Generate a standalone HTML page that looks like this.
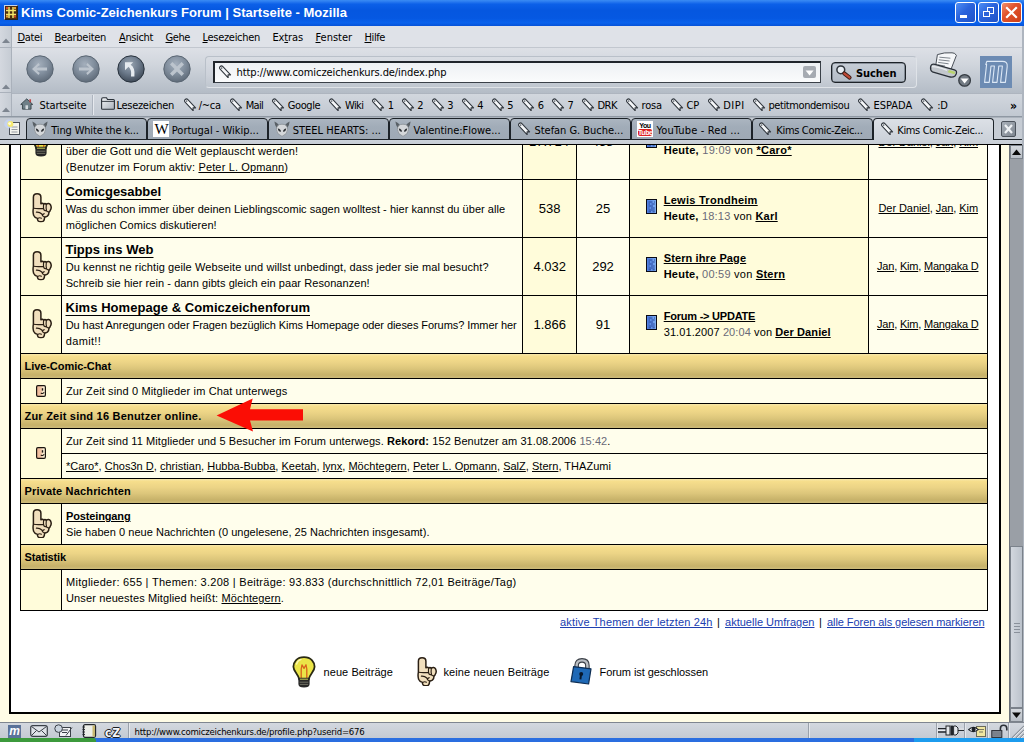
<!DOCTYPE html><html lang="de"><head><meta charset="utf-8"><title>Kims Comic-Zeichenkurs Forum | Startseite</title><style>
*{margin:0;padding:0;box-sizing:border-box}
html,body{width:1024px;height:742px;overflow:hidden}
body{position:relative;background:#fffce6;font-family:"Liberation Sans",sans-serif;font-size:12px;color:#000}
.a{position:absolute}
.t{position:absolute;white-space:nowrap;line-height:16px;height:16px}
.t b{font-weight:bold}
u{text-decoration:underline}
.g{color:#6a6a78}
.lk{color:#2040b0}
.tu{text-underline-offset:2.5px;text-decoration-thickness:1.4px}
</style></head><body>
<div class="a " style="left:9px;top:145px;width:992px;height:569px;background:#fff;border:2px solid #000;border-top:none"></div>
<div class="a " style="left:20px;top:145px;width:968px;height:466px;background:#000"></div>
<div class="a " style="left:21px;top:145px;width:40px;height:34px;background:#fffcda"></div>
<div class="a " style="left:62px;top:145px;width:460px;height:34px;background:#fffeec"></div>
<div class="a " style="left:523px;top:145px;width:53px;height:34px;background:#fffcda"></div>
<div class="a " style="left:577px;top:145px;width:52px;height:34px;background:#fffeec"></div>
<div class="a " style="left:630px;top:145px;width:238px;height:34px;background:#fffcda"></div>
<div class="a " style="left:869px;top:145px;width:118px;height:34px;background:#fffeec"></div>
<div class="a " style="left:21px;top:180px;width:40px;height:57px;background:#fffcda"></div>
<div class="a " style="left:62px;top:180px;width:460px;height:57px;background:#fffeec"></div>
<div class="a " style="left:523px;top:180px;width:53px;height:57px;background:#fffcda"></div>
<div class="a " style="left:577px;top:180px;width:52px;height:57px;background:#fffeec"></div>
<div class="a " style="left:630px;top:180px;width:238px;height:57px;background:#fffcda"></div>
<div class="a " style="left:869px;top:180px;width:118px;height:57px;background:#fffeec"></div>
<div class="a " style="left:21px;top:238px;width:40px;height:57px;background:#fffcda"></div>
<div class="a " style="left:62px;top:238px;width:460px;height:57px;background:#fffeec"></div>
<div class="a " style="left:523px;top:238px;width:53px;height:57px;background:#fffcda"></div>
<div class="a " style="left:577px;top:238px;width:52px;height:57px;background:#fffeec"></div>
<div class="a " style="left:630px;top:238px;width:238px;height:57px;background:#fffcda"></div>
<div class="a " style="left:869px;top:238px;width:118px;height:57px;background:#fffeec"></div>
<div class="a " style="left:21px;top:296px;width:40px;height:57px;background:#fffcda"></div>
<div class="a " style="left:62px;top:296px;width:460px;height:57px;background:#fffeec"></div>
<div class="a " style="left:523px;top:296px;width:53px;height:57px;background:#fffcda"></div>
<div class="a " style="left:577px;top:296px;width:52px;height:57px;background:#fffeec"></div>
<div class="a " style="left:630px;top:296px;width:238px;height:57px;background:#fffcda"></div>
<div class="a " style="left:869px;top:296px;width:118px;height:57px;background:#fffeec"></div>
<div class="a " style="left:21px;top:354px;width:966px;height:24px;background:linear-gradient(#f8e8aa 0%,#f6de8c 10%,#ecd486 35%,#dcc67b 60%,#c6b169 88%,#cdbb7a 100%)"></div>
<div class="a " style="left:21px;top:404px;width:966px;height:24px;background:linear-gradient(#f8e8aa 0%,#f6de8c 10%,#ecd486 35%,#dcc67b 60%,#c6b169 88%,#cdbb7a 100%)"></div>
<div class="a " style="left:21px;top:479px;width:966px;height:24px;background:linear-gradient(#f8e8aa 0%,#f6de8c 10%,#ecd486 35%,#dcc67b 60%,#c6b169 88%,#cdbb7a 100%)"></div>
<div class="a " style="left:21px;top:545px;width:966px;height:24px;background:linear-gradient(#f8e8aa 0%,#f6de8c 10%,#ecd486 35%,#dcc67b 60%,#c6b169 88%,#cdbb7a 100%)"></div>
<div class="a " style="left:21px;top:379px;width:40px;height:24px;background:#fffcda"></div>
<div class="a " style="left:62px;top:379px;width:925px;height:24px;background:#fffeec"></div>
<div class="a " style="left:21px;top:504px;width:40px;height:40px;background:#fffcda"></div>
<div class="a " style="left:62px;top:504px;width:925px;height:40px;background:#fffeec"></div>
<div class="a " style="left:21px;top:570px;width:40px;height:40px;background:#fffcda"></div>
<div class="a " style="left:62px;top:570px;width:925px;height:40px;background:#fffeec"></div>
<div class="a " style="left:21px;top:429px;width:40px;height:49px;background:#fffcda"></div>
<div class="a " style="left:62px;top:429px;width:925px;height:24px;background:#fffeec"></div>
<div class="a " style="left:62px;top:454px;width:925px;height:24px;background:#fffeec"></div>
<span class="t" style="left:65.7px;top:143px;font-size:11px;letter-spacing:0.143px;">über die Gott und die Welt geplauscht werden!</span>
<span class="t" style="left:65.7px;top:159px;font-size:11px;letter-spacing:0.144px;">(Benutzer im Forum aktiv: <u>Peter L. Opmann</u>)</span>
<span class="t" style="left:663.7px;top:142px;font-size:11px;letter-spacing:0.274px;"><b>Heute,</b> <span class="g">19:09</span> von <b><u>*Caro*</u></b></span>
<span class="t" style="left:549px;top:133.5px;font-size:13px;transform:translateX(-50%)">17.714</span>
<span class="t" style="left:602.5px;top:133.5px;font-size:13px;transform:translateX(-50%)">458</span>
<span class="t" style="left:878.5px;top:133.5px;font-size:11px;letter-spacing:-0.071px;"><u>Der Daniel</u>, <u>Jan</u>, <u>Kim</u></span>
<span class="t" style="left:65.5px;top:184px;font-size:13px;letter-spacing:-0.046px;"><b><u class="tu">Comicgesabbel</u></b></span>
<span class="t" style="left:65.7px;top:200.5px;font-size:11px;letter-spacing:0.038px;">Was du schon immer über deinen Lieblingscomic sagen wolltest - hier kannst du über alle</span>
<span class="t" style="left:65.7px;top:217px;font-size:11px;letter-spacing:0.063px;">möglichen Comics diskutieren!</span>
<span class="t" style="left:549.7px;top:201px;font-size:13px;transform:translateX(-50%)">538</span>
<span class="t" style="left:603px;top:201px;font-size:13px;transform:translateX(-50%)">25</span>
<span class="t" style="left:663.7px;top:192px;font-size:11px;letter-spacing:0.276px;"><b><u>Lewis Trondheim</u></b></span>
<span class="t" style="left:663.7px;top:208px;font-size:11px;letter-spacing:0.215px;"><b>Heute,</b> <span class="g">18:13</span> von <b><u>Karl</u></b></span>
<span class="t" style="left:878.5px;top:200px;font-size:11px;letter-spacing:-0.071px;"><u>Der Daniel</u>, <u>Jan</u>, <u>Kim</u></span>
<span class="t" style="left:65.5px;top:242px;font-size:13px;letter-spacing:0.026px;"><b><u class="tu">Tipps ins Web</u></b></span>
<span class="t" style="left:65.7px;top:258.5px;font-size:11px;letter-spacing:0.101px;">Du kennst ne richtig geile Webseite und willst unbedingt, dass jeder sie mal besucht?</span>
<span class="t" style="left:65.7px;top:275px;font-size:11px;letter-spacing:0.061px;">Schreib sie hier rein - dann gibts gleich ein paar Resonanzen!</span>
<span class="t" style="left:549.7px;top:259px;font-size:13px;transform:translateX(-50%)">4.032</span>
<span class="t" style="left:603px;top:259px;font-size:13px;transform:translateX(-50%)">292</span>
<span class="t" style="left:663.7px;top:250px;font-size:11px;letter-spacing:0.120px;"><b><u>Stern ihre Page</u></b></span>
<span class="t" style="left:663.7px;top:266px;font-size:11px;letter-spacing:0.241px;"><b>Heute,</b> <span class="g">00:59</span> von <b><u>Stern</u></b></span>
<span class="t" style="left:877px;top:258px;font-size:11px;letter-spacing:-0.196px;"><u>Jan</u>, <u>Kim</u>, <u>Mangaka D</u></span>
<span class="t" style="left:65.5px;top:300px;font-size:13px;letter-spacing:0.054px;"><b><u class="tu">Kims Homepage &amp; Comiczeichenforum</u></b></span>
<span class="t" style="left:65.7px;top:316.5px;font-size:11px;letter-spacing:-0.068px;">Du hast Anregungen oder Fragen bezüglich Kims Homepage oder dieses Forums? Immer her</span>
<span class="t" style="left:65.7px;top:333px;font-size:11px;letter-spacing:0.355px;">damit!!</span>
<span class="t" style="left:549.7px;top:317px;font-size:13px;transform:translateX(-50%)">1.866</span>
<span class="t" style="left:603px;top:317px;font-size:13px;transform:translateX(-50%)">91</span>
<span class="t" style="left:663.7px;top:308px;font-size:11px;letter-spacing:-0.222px;"><b><u>Forum -&gt; UPDATE</u></b></span>
<span class="t" style="left:663.7px;top:324px;font-size:11px;letter-spacing:0.099px;">31.01.2007 <span class="g">20:04</span> von <b><u>Der Daniel</u></b></span>
<span class="t" style="left:877px;top:316px;font-size:11px;letter-spacing:-0.196px;"><u>Jan</u>, <u>Kim</u>, <u>Mangaka D</u></span>
<span class="t" style="left:24.5px;top:358px;font-size:11px;letter-spacing:-0.060px;"><b>Live-Comic-Chat</b></span>
<span class="t" style="left:24.5px;top:408px;font-size:11px;letter-spacing:0.214px;"><b>Zur Zeit sind 16 Benutzer online.</b></span>
<span class="t" style="left:24.5px;top:483px;font-size:11px;letter-spacing:0.167px;"><b>Private Nachrichten</b></span>
<span class="t" style="left:24.5px;top:549px;font-size:11px;letter-spacing:-0.144px;"><b>Statistik</b></span>
<span class="t" style="left:66px;top:383px;font-size:11px;letter-spacing:0.129px;">Zur Zeit sind 0 Mitglieder im Chat unterwegs</span>
<span class="t" style="left:66px;top:432.8px;font-size:11px;letter-spacing:0.081px;">Zur Zeit sind 11 Mitglieder und 5 Besucher im Forum unterwegs. <b>Rekord:</b> 152 Benutzer am 31.08.2006 <span class="g">15:42</span>.</span>
<span class="t" style="left:66px;top:457.8px;font-size:11px;letter-spacing:0.020px;"><u>*Caro*</u>, <u>Chos3n D</u>, <u>christian</u>, <u>Hubba-Bubba</u>, <u>Keetah</u>, <u>lynx</u>, <u>Möchtegern</u>, <u>Peter L. Opmann</u>, <u>SalZ</u>, <u>Stern</u>, THAZumi</span>
<span class="t" style="left:66px;top:508px;font-size:11px;letter-spacing:-0.138px;"><b><u>Posteingang</u></b></span>
<span class="t" style="left:66px;top:524px;font-size:11px;letter-spacing:0.039px;">Sie haben 0 neue Nachrichten (0 ungelesene, 25 Nachrichten insgesamt).</span>
<span class="t" style="left:66px;top:574px;font-size:11px;letter-spacing:0.276px;">Mitglieder: 655 | Themen: 3.208 | Beiträge: 93.833 (durchschnittlich 72,01 Beiträge/Tag)</span>
<span class="t" style="left:66px;top:590px;font-size:11px;letter-spacing:0.124px;">Unser neuestes Mitglied heißt: <u>Möchtegern</u>.</span>
<span class="t" style="left:560px;top:613.5px;font-size:11px;letter-spacing:0.163px;"><span class="lk"><u>aktive Themen der letzten 24h</u></span></span>
<span class="t" style="left:717px;top:613.5px;font-size:11px;">|</span>
<span class="t" style="left:725px;top:613.5px;font-size:11px;letter-spacing:0.013px;"><span class="lk"><u>aktuelle Umfragen</u></span></span>
<span class="t" style="left:819px;top:613.5px;font-size:11px;">|</span>
<span class="t" style="left:827px;top:613.5px;font-size:11px;letter-spacing:-0.065px;"><span class="lk"><u>alle Foren als gelesen markieren</u></span></span>
<span class="t" style="left:323.5px;top:664px;font-size:11px;letter-spacing:0.077px;">neue Beiträge</span>
<span class="t" style="left:443.5px;top:664px;font-size:11px;letter-spacing:0.102px;">keine neuen Beiträge</span>
<span class="t" style="left:599.5px;top:664px;font-size:11px;letter-spacing:-0.074px;">Forum ist geschlossen</span>
<svg class="a" style="left:214px;top:396px" width="92" height="38" viewBox="0 0 92 38"><polygon points="2.6,19.6 38.7,2.6 36,13.3 89,13.3 89,24.4 36,24.4 39,35.6" fill="#fb0d05"/></svg>
<svg width="0" height="0" style="position:absolute"><defs>
<symbol id="hand" viewBox="-0.8 -0.6 20 29.4" preserveAspectRatio="none">
<path d="M0.6,14.5 V3.6 Q0.6,0.2 4.3,0.2 Q8.1,0.2 8.1,3.6 V10.2 Q9.6,9 10.8,10.6 Q12.2,9.4 13.5,10.6 Q16,8.8 17.8,11.4 Q19.2,14.6 17.4,16.8 Q17,18 16.2,18.4 Q16.2,21.4 14.6,22.6 Q13,23.4 11.8,23.6 Q11.8,26.4 10.6,27.6 Q8,28.8 5.6,27.6 Q4.4,26.4 4.6,24.8 Q1.8,24 0.8,21.6 Q-0.2,18 0.6,14.5 Z" fill="#f1dfbd" stroke="#2a1f14" stroke-width="1.5" stroke-linejoin="round"/>
<path d="M0.8,14.7 Q5,15.4 10.4,14.8 M10.8,10.8 Q10.4,13.4 11,16.2 M13.5,10.8 Q13,14 13.8,17.4 M10.4,14.8 Q11,17 13.8,17.4 Q15,18.4 16.2,18.4 M3.6,18.6 Q7,18.4 9,20.4 Q10.4,21.2 11.4,20 M9,20.6 Q9.4,22.6 11.8,23.4 M4.8,24.8 Q7,23.6 8.6,24.6" fill="none" stroke="#2a1f14" stroke-width="1.15" stroke-linecap="round"/>
</symbol>
<symbol id="bulb" viewBox="0 0 24 32">
<path d="M12,1.2 C4.6,1.2 1.4,6.4 1.4,10.8 C1.4,15.6 6.4,18 7.2,23.4 H16.8 C17.6,18 22.6,15.6 22.6,10.8 C22.6,6.4 19.4,1.2 12,1.2 Z" fill="#ebe548" stroke="#2a2a14" stroke-width="1.8"/>
<path d="M4.6,8 Q5.6,4.4 9,3.4" fill="none" stroke="#fbf9b0" stroke-width="1.4" stroke-linecap="round"/>
<path d="M9.2,22.6 V13 L10,8.8 L12,12.4 L14,8.8 L14.8,13 V22.6" fill="none" stroke="#d8631c" stroke-width="1.3" stroke-linejoin="round"/>
<path d="M6.4,21.8 H17.6 V28 Q17.6,31.6 12,31.6 Q6.4,31.6 6.4,28 Z" fill="#262626"/>
<path d="M8,23.2 H16" stroke="#c9cf58" stroke-width="1"/><path d="M7.6,26.2 H16.4 M7.8,28.4 H16.2" stroke="#77776a" stroke-width="0.9"/>
</symbol>
<symbol id="lock" viewBox="0 0 22 27">
<path d="M6.6,12 V7.4 Q6.6,2.4 12,2.4 Q17.4,2.4 17.4,7.4 V12" fill="none" stroke="#3a3f46" stroke-width="4.6"/>
<path d="M6.6,12 V7.4 Q6.6,2.4 12,2.4 Q17.4,2.4 17.4,7.4 V12" fill="none" stroke="#b9bdc2" stroke-width="2.4"/>
<path d="M3.6,8.6 L21,10.8 L18.6,26 L1,23.6 Z" fill="#1f69b6" stroke="#0c2c52" stroke-width="1.2" stroke-linejoin="round"/>
<circle cx="11.2" cy="16" r="2" fill="#08182c"/><path d="M11,16.4 L10.4,21.4" stroke="#08182c" stroke-width="2"/>
</symbol>
<linearGradient id="dg" x1="0" x2="1"><stop offset="0" stop-color="#4a7ae0"/><stop offset="1" stop-color="#80b0f0"/></linearGradient>
<symbol id="doc" viewBox="0 0 11 15"><rect x="0.5" y="0.5" width="10" height="14" fill="url(#dg)" stroke="#0a0a14"/>
<path d="M2.5,3 H6.5 M8,3 H9 M2.5,5 H4 M5.5,5 H8.8 M2.5,7 H7 M2.5,9 H3.5 M5,9 H8.8 M2.5,11 H8.8 M2.5,12.8 H5 M6.5,12.8 H8.8" stroke="#16348c" stroke-width="0.8"/></symbol>
<linearGradient id="cg" x1="0" x2="1"><stop offset="0" stop-color="#efb898"/><stop offset="0.5" stop-color="#f3c6a6"/><stop offset="0.75" stop-color="#fbeed2"/><stop offset="1" stop-color="#fdf6dc"/></linearGradient>
<symbol id="chat" viewBox="0 0 10 12"><rect x="0.6" y="0.6" width="8.8" height="10.8" rx="1.3" fill="url(#cg)" stroke="#1a1410" stroke-width="1.2"/>
<rect x="5.8" y="3.2" width="1.4" height="2.4" fill="#1a1410"/><path d="M4.8,7.8 Q6.6,9.6 8.2,7.2" fill="none" stroke="#1a1410" stroke-width="1.1"/></symbol>
</defs></svg>
<svg class="a" style="left:32.2px;top:193.4px;" width="20" height="29.4"><use href="#hand"/></svg>
<svg class="a" style="left:646px;top:199px;" width="11" height="15"><use href="#doc"/></svg>
<svg class="a" style="left:32.2px;top:251.4px;" width="20" height="29.4"><use href="#hand"/></svg>
<svg class="a" style="left:646px;top:257px;" width="11" height="15"><use href="#doc"/></svg>
<svg class="a" style="left:32.2px;top:309.4px;" width="20" height="29.4"><use href="#hand"/></svg>
<svg class="a" style="left:646px;top:315px;" width="11" height="15"><use href="#doc"/></svg>
<svg class="a" style="left:32.2px;top:508.9px;" width="20" height="29.4"><use href="#hand"/></svg>
<svg class="a" style="left:36px;top:385px;" width="10" height="12"><use href="#chat"/></svg>
<svg class="a" style="left:36px;top:447px;" width="10" height="12"><use href="#chat"/></svg>
<svg class="a" style="left:292px;top:656px;" width="24" height="32"><use href="#bulb"/></svg>
<svg class="a" style="left:416.7px;top:656.8px;" width="20" height="29.4"><use href="#hand"/></svg>
<svg class="a" style="left:570px;top:658px;" width="22" height="27"><use href="#lock"/></svg>
<div class="a " style="left:21px;top:145px;width:966px;height:34px;overflow:hidden;background:none"><svg class="a" style="left:8px;top:-20px" width="24" height="32"><use href="#bulb"/></svg><svg class="a" style="left:625px;top:-12px" width="11" height="15"><use href="#doc"/></svg></div>
<div class="a " style="left:0px;top:0px;width:1024px;height:26px;background:linear-gradient(#3a8cf4 0%,#2b7cf0 6%,#0c60e8 16%,#0557e0 40%,#0558e2 70%,#0a62ec 88%,#0652d8 100%)"></div>
<span class="t" style="left:21px;top:5px;font-size:13px;letter-spacing:0.017px;color:#fff"><b>Kims Comic-Zeichenkurs Forum | Startseite - Mozilla</b></span>
<div class="a " style="left:0px;top:26px;width:1024px;height:22px;background:#dfe2e8;border-bottom:1px solid #c2c7cf"></div>
<span class="t" style="left:17.5px;top:30px;font-size:11px;letter-spacing:-0.384px;font-family:'DejaVu Sans Condensed','DejaVu Sans','Liberation Sans',sans-serif;font-stretch:condensed;"><u>D</u>atei</span>
<span class="t" style="left:54.5px;top:30px;font-size:11px;letter-spacing:-0.289px;font-family:'DejaVu Sans Condensed','DejaVu Sans','Liberation Sans',sans-serif;font-stretch:condensed;"><u>B</u>earbeiten</span>
<span class="t" style="left:119px;top:30px;font-size:11px;letter-spacing:-0.366px;font-family:'DejaVu Sans Condensed','DejaVu Sans','Liberation Sans',sans-serif;font-stretch:condensed;"><u>A</u>nsicht</span>
<span class="t" style="left:165.5px;top:30px;font-size:11px;letter-spacing:-0.410px;font-family:'DejaVu Sans Condensed','DejaVu Sans','Liberation Sans',sans-serif;font-stretch:condensed;"><u>G</u>ehe</span>
<span class="t" style="left:202.5px;top:30px;font-size:11px;letter-spacing:-0.298px;font-family:'DejaVu Sans Condensed','DejaVu Sans','Liberation Sans',sans-serif;font-stretch:condensed;"><u>L</u>esezeichen</span>
<span class="t" style="left:272.5px;top:30px;font-size:11px;letter-spacing:-0.133px;font-family:'DejaVu Sans Condensed','DejaVu Sans','Liberation Sans',sans-serif;font-stretch:condensed;">Ex<u>t</u>ras</span>
<span class="t" style="left:315.5px;top:30px;font-size:11px;letter-spacing:-0.022px;font-family:'DejaVu Sans Condensed','DejaVu Sans','Liberation Sans',sans-serif;font-stretch:condensed;"><u>F</u>enster</span>
<span class="t" style="left:364.5px;top:30px;font-size:11px;letter-spacing:-0.406px;font-family:'DejaVu Sans Condensed','DejaVu Sans','Liberation Sans',sans-serif;font-stretch:condensed;"><u>H</u>ilfe</span>
<div class="a " style="left:0px;top:48px;width:1024px;height:45px;background:linear-gradient(#dde0e6 0%,#d1d6dd 35%,#c0c7d0 72%,#b4bcc6 100%)"></div>
<div class="a " style="left:0px;top:93px;width:1024px;height:23px;background:linear-gradient(#d2d7de,#c1c8d1);border-top:1px solid #aeb5bf"></div>
<div class="a " style="left:0px;top:722px;width:1024px;height:16px;background:linear-gradient(#d3d8df,#c4cad3);border-top:1px solid #7f8690"></div>
<div class="a " style="left:0px;top:738px;width:1024px;height:4px;background:#2a6ee0"></div>
<div class="a " style="left:0px;top:738px;width:96px;height:4px;background:#3c9a3c;border-radius:0 3px 0 0"></div>
<div class="a " style="left:914px;top:738px;width:110px;height:4px;background:#1c9cee"></div>
<span class="t" style="left:134.5px;top:723.5px;font-size:9.5px;letter-spacing:-0.226px;font-family:'DejaVu Sans Condensed','DejaVu Sans','Liberation Sans',sans-serif;font-stretch:condensed;">http://www.comiczeichenkurs.de/profile.php?userid=676</span>
<svg width="0" height="0" style="position:absolute"><defs>
<symbol id="tg" viewBox="0 0 13 13"><g transform="translate(2.6,0.2) rotate(47)"><path d="M1.9,0 H13.2 L11.4,1.9 L13.8,3.8 H1.9 A1.9,1.9 0 0 1 1.9,0 Z" fill="#f6f8fa" stroke="#30363d" stroke-width="1.05" stroke-linejoin="round"/><circle cx="2.2" cy="1.9" r="0.75" fill="#5a6068"/></g></symbol>
<radialGradient id="nbd" cx="45%" cy="32%" r="68%"><stop offset="0" stop-color="#a4afbc"/><stop offset="0.5" stop-color="#8491a0"/><stop offset="1" stop-color="#5f6b79"/></radialGradient>
<radialGradient id="nbe" cx="45%" cy="32%" r="68%"><stop offset="0" stop-color="#99a5b2"/><stop offset="0.5" stop-color="#6f7d8e"/><stop offset="1" stop-color="#3f4a58"/></radialGradient>
<symbol id="dv" viewBox="0 0 16 16"><path d="M0.4,0.6 Q3,1.6 5.4,4.6 L3,7.4 Q0.6,4.6 0.4,0.6 Z M15.6,0.6 Q13,1.6 10.6,4.6 L13,7.4 Q15.4,4.6 15.6,0.6 Z" fill="#596066"/><path d="M8,3.2 Q13.6,3.2 13.6,8.6 Q13.6,13 8,15.4 Q2.4,13 2.4,8.6 Q2.4,3.2 8,3.2 Z" fill="#d4d7da" stroke="#80868c" stroke-width="0.7"/><path d="M3.8,7.4 Q6.6,7.6 7,10.6 Q4.4,11 3.8,7.4 Z M12.2,7.4 Q9.4,7.6 9,10.6 Q11.6,11 12.2,7.4 Z" fill="#2a2e32"/></symbol>
</defs></svg>
<div class="a " style="left:0px;top:26px;width:12px;height:90px;background:linear-gradient(90deg,#d4d8df,#c6ccd4);border-right:1px solid #aab1bb"></div>
<svg class="a" style="left:2px;top:38px" width="8" height="5"><polygon points="0,5 4,0.5 8,5" fill="#7d8590"/></svg>
<svg class="a" style="left:2px;top:84px" width="8" height="5"><polygon points="0,5 4,0.5 8,5" fill="#7d8590"/></svg>
<svg class="a" style="left:2px;top:107px" width="8" height="5"><polygon points="0,5 4,0.5 8,5" fill="#7d8590"/></svg>
<div class="a " style="left:0px;top:47px;width:12px;height:1px;background:#aab1bb"></div>
<div class="a " style="left:0px;top:92px;width:12px;height:1px;background:#aab1bb"></div>
<div class="a" style="left:955px;top:2px;width:21px;height:21px;border:1px solid #fff;border-radius:3px;background:linear-gradient(135deg,#4f8ff5 0%,#2a63dc 45%,#1f52c8 100%)"><div class="a" style="left:4px;top:12px;width:7px;height:3px;background:#fff"></div></div>
<div class="a" style="left:978px;top:2px;width:21px;height:21px;border:1px solid #fff;border-radius:3px;background:linear-gradient(135deg,#4f8ff5 0%,#2a63dc 45%,#1f52c8 100%)"><div class="a" style="left:7.5px;top:4px;width:7px;height:6.5px;border:1px solid #fff;border-top-width:1.6px"></div><div class="a" style="left:4px;top:7.5px;width:7px;height:6.5px;border:1px solid #fff;border-top-width:1.6px;background:#2c62d8"></div></div>
<div class="a" style="left:1001px;top:2px;width:21px;height:21px;border:1px solid #fff;border-radius:3px;background:linear-gradient(135deg,#f0916f 0%,#e2532c 40%,#cc3f1a 100%)"><svg class="a" style="left:3px;top:3px" width="13" height="13"><path d="M1.2,1.2 L11.8,11.8 M11.8,1.2 L1.2,11.8" stroke="#fff" stroke-width="2.2"/></svg></div>
<div class="a " style="left:4px;top:5px;width:14px;height:15px;background:#4a2c10;border:1px solid #c8d4e8;border-right-color:#222;border-bottom-color:#222"><svg width="12" height="13"><path d="M4,1 V12 M8,1 V12 M1,4.5 H11 M1,8.5 H11" stroke="#f4e468" stroke-width="1.5"/><rect x="1" y="1" width="2" height="2" fill="#d84820"/><rect x="9" y="9.5" width="2" height="2" fill="#d84820"/><rect x="9" y="1" width="2" height="2" fill="#e8a030"/><rect x="1" y="9.5" width="2" height="2" fill="#e8a030"/></svg></div>
<svg class="a" style="left:24.5px;top:54.400000000000006px" width="30" height="30" viewBox="-15 -15 30 30"><circle r="13.2" fill="url(#nbd)" stroke="#5a6673" stroke-width="1"/><path d="M-8,0 L-1.5,-6 L-0.2,-4 L-3.4,-1.6 H7 V1.6 H-3.4 L-0.2,4 L-1.5,6 Z" fill="#bcc4cd"/></svg>
<svg class="a" style="left:70.5px;top:54.400000000000006px" width="30" height="30" viewBox="-15 -15 30 30"><circle r="13.2" fill="url(#nbd)" stroke="#5a6673" stroke-width="1"/><path d="M8,0 L1.5,-6 L0.2,-4 L3.4,-1.6 H-7 V1.6 H3.4 L0.2,4 L1.5,6 Z" fill="#bcc4cd"/></svg>
<svg class="a" style="left:116px;top:54.400000000000006px" width="30" height="30" viewBox="-15 -15 30 30"><circle r="13.2" fill="url(#nbe)" stroke="#28323d" stroke-width="1"/><path d="M-6,-6.8 H2.2 L-0.4,-4.2 Q4.4,-1.4 3.4,7.4 H0 Q0.8,0.6 -2.4,-2.2 L-6,1.2 Z" fill="#e6ebf0"/></svg>
<svg class="a" style="left:161.5px;top:54.400000000000006px" width="30" height="30" viewBox="-15 -15 30 30"><circle r="13.2" fill="url(#nbd)" stroke="#5a6673" stroke-width="1"/><path d="M-7,-4.6 L-4.6,-7 L0,-2.4 L4.6,-7 L7,-4.6 L2.4,0 L7,4.6 L4.6,7 L0,2.4 L-4.6,7 L-7,4.6 L-2.4,0 Z" fill="#bcc4cd"/></svg>
<div class="a " style="left:205px;top:56px;width:712px;height:32px;border:1px solid #b9c0c9;border-bottom-color:#dfe3e8;border-right-color:#dfe3e8;border-radius:4px;background:linear-gradient(#d9dde3,#cdd2da 60%,#bfc6cf)"></div>
<div class="a " style="left:213px;top:61px;width:608px;height:22px;border:1px solid #3a4048;border-top:2px solid #20252b;border-left:2px solid #20252b;background:linear-gradient(#eef1f4,#fafbfc)"></div>
<svg class="a" style="left:219px;top:65px" width="13" height="13"><use href="#tg"/></svg>
<span class="t" style="left:236.5px;top:65px;font-size:11px;letter-spacing:-0.074px;font-family:'DejaVu Sans Condensed','DejaVu Sans','Liberation Sans',sans-serif;font-stretch:condensed;">http://www.comiczeichenkurs.de/index.php</span>
<div class="a " style="left:803px;top:66px;width:13px;height:12px;background:#a6abb2;border-radius:2px"><svg width="13" height="12"><polygon points="2.6,4.4 10.6,4.4 6.6,9.4" fill="#fff"/></svg></div>
<div class="a " style="left:831px;top:62px;width:75px;height:21px;border:1px solid #1c2228;border-radius:4px;background:linear-gradient(#c6cdd6,#b3bcc7);box-shadow:inset 0 0 0 0.5px #4a525c"></div>
<svg class="a" style="left:834px;top:63px" width="20" height="19"><circle cx="6.8" cy="6.8" r="3.9" fill="#e8eef4" stroke="#2e343b" stroke-width="1.5"/><path d="M10.2,10.4 L15.6,14.6" stroke="#3a1a14" stroke-width="4" stroke-linecap="round"/><path d="M10.4,10.6 L15.4,14.4" stroke="#c04a36" stroke-width="2.4" stroke-linecap="round"/></svg>
<span class="t" style="left:856px;top:66px;font-size:11px;letter-spacing:-0.060px;font-family:'DejaVu Sans Condensed','DejaVu Sans','Liberation Sans',sans-serif;font-stretch:condensed;"><b>Suchen</b></span>
<svg class="a" style="left:928px;top:50px" width="46" height="38" viewBox="0 0 46 38"><path d="M9.4,4.6 Q16,2.2 24,2.8 Q27,2.6 28.4,5.4 L22.6,20.4 L7.6,16.4 Z" fill="#f5f7f9" stroke="#4a5058" stroke-width="1"/><path d="M11.4,7.2 L22.4,8.2 M10.8,9.8 L21.6,11 M10.2,12.4 L20.6,13.8 M9.8,14.8 L17,16" stroke="#7d848c" stroke-width="1"/><path d="M2.6,17 Q3,13.2 7,14.4 L26.4,19.8 Q29.4,20.8 28.2,24 L27,26 Q24.6,27.8 20.6,26.6 L4.4,21.8 Q2.2,20.4 2.6,17 Z" fill="#c2c7cd" stroke="#2a3038" stroke-width="1.3"/><path d="M4,16.6 Q10,16.4 19,20.4" stroke="#e9ecef" stroke-width="1.4" fill="none"/><path d="M19.6,22.2 L26.6,24.2 L27.2,21.8 L21,20 Z" fill="#b9d46e"/><circle cx="36.6" cy="30.4" r="5.8" fill="#737b84" stroke="#363c43" stroke-width="1.3"/><polygon points="32.6,28.6 40.6,28.6 36.6,33.6" fill="#fff"/></svg>
<div class="a " style="left:980px;top:56px;width:32px;height:32px;background:#6c8bb3"><svg width="32" height="32" viewBox="0 0 32 32"><path d="M6.8,5.4 H22.4 Q27.8,5.4 27.2,10.6 L25.4,26.4 H20.6 L22.4,10 H18.8 L17,26.4 H12.6 L14.4,10 H11 L9.2,26.4 H4.6 L6.6,8.4 H5.8 Z" fill="none" stroke="#dce8f6" stroke-width="1.1" stroke-linejoin="round"/></svg></div>
<svg class="a" style="left:19.5px;top:98px" width="13.5" height="12" viewBox="0 0 15 14"><path d="M0.5,7.5 L7.5,1 L14.5,7.5 H12.5 V13 H2.5 V7.5 Z" fill="#6f8088" stroke="#3c484f" stroke-width="1.1"/><rect x="6" y="8.5" width="3" height="4.5" fill="#d4dade"/><rect x="10.5" y="1.5" width="2" height="3.5" fill="#b44"/></svg>
<span class="t" style="left:39.5px;top:97.5px;font-size:11px;letter-spacing:-0.114px;font-family:'DejaVu Sans Condensed','DejaVu Sans','Liberation Sans',sans-serif;font-stretch:condensed;">Startseite</span>
<div class="a " style="left:92px;top:95px;width:2px;height:20px;border-left:1px solid #aeb5bf;border-right:1px solid #e6e9ee"></div>
<svg class="a" style="left:101px;top:97px" width="14" height="13" viewBox="0 0 14 13"><defs><linearGradient id="fg" x1="0" y1="0" x2="1" y2="1"><stop offset="0" stop-color="#f2f4f6"/><stop offset="1" stop-color="#a9b0ba"/></linearGradient></defs><path d="M0.6,2.5 Q0.6,0.8 2,0.8 H5.5 L6.5,2.5 H12.4 Q13.4,2.5 13.4,3.6 V11.4 Q13.4,12.2 12.4,12.2 H1.6 Q0.6,12.2 0.6,11.4 Z" fill="url(#fg)" stroke="#2a3038" stroke-width="1.1"/><path d="M0.6,4.4 H13.4" stroke="#2a3038" stroke-width="0.9"/></svg>
<span class="t" style="left:116.5px;top:97.5px;font-size:11px;letter-spacing:-0.298px;font-family:'DejaVu Sans Condensed','DejaVu Sans','Liberation Sans',sans-serif;font-stretch:condensed;">Lesezeichen</span>
<svg class="a" style="left:183.5px;top:98px" width="13" height="13"><use href="#tg"/></svg>
<span class="t" style="left:198.8px;top:97.5px;font-size:11px;letter-spacing:-0.285px;font-family:'DejaVu Sans Condensed','DejaVu Sans','Liberation Sans',sans-serif;font-stretch:condensed;">/~ca</span>
<svg class="a" style="left:230px;top:98px" width="13" height="13"><use href="#tg"/></svg>
<span class="t" style="left:245.8px;top:97.5px;font-size:11px;letter-spacing:-0.727px;font-family:'DejaVu Sans Condensed','DejaVu Sans','Liberation Sans',sans-serif;font-stretch:condensed;">Mail</span>
<svg class="a" style="left:271.7px;top:98px" width="13" height="13"><use href="#tg"/></svg>
<span class="t" style="left:287.8px;top:97.5px;font-size:11px;letter-spacing:-0.418px;font-family:'DejaVu Sans Condensed','DejaVu Sans','Liberation Sans',sans-serif;font-stretch:condensed;">Google</span>
<svg class="a" style="left:329.2px;top:98px" width="13" height="13"><use href="#tg"/></svg>
<span class="t" style="left:345px;top:97.5px;font-size:11px;letter-spacing:-0.595px;font-family:'DejaVu Sans Condensed','DejaVu Sans','Liberation Sans',sans-serif;font-stretch:condensed;">Wiki</span>
<svg class="a" style="left:372px;top:98px" width="13" height="13"><use href="#tg"/></svg>
<span class="t" style="left:387.8px;top:97.5px;font-size:11px;letter-spacing:-1.797px;font-family:'DejaVu Sans Condensed','DejaVu Sans','Liberation Sans',sans-serif;font-stretch:condensed;">1</span>
<svg class="a" style="left:401.8px;top:98px" width="13" height="13"><use href="#tg"/></svg>
<span class="t" style="left:417.3px;top:97.5px;font-size:11px;letter-spacing:-0.597px;font-family:'DejaVu Sans Condensed','DejaVu Sans','Liberation Sans',sans-serif;font-stretch:condensed;">2</span>
<svg class="a" style="left:431.8px;top:98px" width="13" height="13"><use href="#tg"/></svg>
<span class="t" style="left:447.3px;top:97.5px;font-size:11px;letter-spacing:-0.597px;font-family:'DejaVu Sans Condensed','DejaVu Sans','Liberation Sans',sans-serif;font-stretch:condensed;">3</span>
<svg class="a" style="left:461.5px;top:98px" width="13" height="13"><use href="#tg"/></svg>
<span class="t" style="left:477.3px;top:97.5px;font-size:11px;letter-spacing:-0.597px;font-family:'DejaVu Sans Condensed','DejaVu Sans','Liberation Sans',sans-serif;font-stretch:condensed;">4</span>
<svg class="a" style="left:491.5px;top:98px" width="13" height="13"><use href="#tg"/></svg>
<span class="t" style="left:507.3px;top:97.5px;font-size:11px;letter-spacing:-0.797px;font-family:'DejaVu Sans Condensed','DejaVu Sans','Liberation Sans',sans-serif;font-stretch:condensed;">5</span>
<svg class="a" style="left:522px;top:98px" width="13" height="13"><use href="#tg"/></svg>
<span class="t" style="left:537.8px;top:97.5px;font-size:11px;letter-spacing:-0.797px;font-family:'DejaVu Sans Condensed','DejaVu Sans','Liberation Sans',sans-serif;font-stretch:condensed;">6</span>
<svg class="a" style="left:552px;top:98px" width="13" height="13"><use href="#tg"/></svg>
<span class="t" style="left:567.5px;top:97.5px;font-size:11px;letter-spacing:-0.497px;font-family:'DejaVu Sans Condensed','DejaVu Sans','Liberation Sans',sans-serif;font-stretch:condensed;">7</span>
<svg class="a" style="left:582px;top:98px" width="13" height="13"><use href="#tg"/></svg>
<span class="t" style="left:597.5px;top:97.5px;font-size:11px;letter-spacing:-0.500px;font-family:'DejaVu Sans Condensed','DejaVu Sans','Liberation Sans',sans-serif;font-stretch:condensed;">DRK</span>
<svg class="a" style="left:625.8px;top:98px" width="13" height="13"><use href="#tg"/></svg>
<span class="t" style="left:641.5px;top:97.5px;font-size:11px;letter-spacing:-0.152px;font-family:'DejaVu Sans Condensed','DejaVu Sans','Liberation Sans',sans-serif;font-stretch:condensed;">rosa</span>
<svg class="a" style="left:671.3px;top:98px" width="13" height="13"><use href="#tg"/></svg>
<span class="t" style="left:686.5px;top:97.5px;font-size:11px;letter-spacing:-0.195px;font-family:'DejaVu Sans Condensed','DejaVu Sans','Liberation Sans',sans-serif;font-stretch:condensed;">CP</span>
<svg class="a" style="left:707.8px;top:98px" width="13" height="13"><use href="#tg"/></svg>
<span class="t" style="left:723.3px;top:97.5px;font-size:11px;letter-spacing:0.445px;font-family:'DejaVu Sans Condensed','DejaVu Sans','Liberation Sans',sans-serif;font-stretch:condensed;">DIPI</span>
<svg class="a" style="left:753.3px;top:98px" width="13" height="13"><use href="#tg"/></svg>
<span class="t" style="left:768.5px;top:97.5px;font-size:11px;letter-spacing:-0.421px;font-family:'DejaVu Sans Condensed','DejaVu Sans','Liberation Sans',sans-serif;font-stretch:condensed;">petitmondemisou</span>
<svg class="a" style="left:858px;top:98px" width="13" height="13"><use href="#tg"/></svg>
<span class="t" style="left:873.5px;top:97.5px;font-size:11px;letter-spacing:0.006px;font-family:'DejaVu Sans Condensed','DejaVu Sans','Liberation Sans',sans-serif;font-stretch:condensed;">ESPADA</span>
<svg class="a" style="left:921px;top:98px" width="13" height="13"><use href="#tg"/></svg>
<span class="t" style="left:937.3px;top:97.5px;font-size:11px;letter-spacing:-0.484px;font-family:'DejaVu Sans Condensed','DejaVu Sans','Liberation Sans',sans-serif;font-stretch:condensed;">:D</span>
<span class="t" style="left:1010px;top:97.5px;font-size:12px;letter-spacing:1.016px;font-family:'DejaVu Sans Condensed','DejaVu Sans','Liberation Sans',sans-serif;font-stretch:condensed;"><b>»</b></span>
<div class="a " style="left:0px;top:116px;width:1024px;height:28px;background:linear-gradient(#8f98a3 0,#8f98a3 1px,#c6ccd4 2px,#c6ccd4 100%)"></div>
<div class="a " style="left:0px;top:139px;width:1024px;height:1px;background:#1c2228"></div>
<div class="a " style="left:0px;top:140px;width:1024px;height:4px;background:linear-gradient(#ccd2da,#c6ccd5)"></div>
<div class="a " style="left:0px;top:144px;width:1024px;height:1px;background:#000"></div>
<div class="a " style="left:26px;top:118px;width:121px;height:22px;border:1px solid #1c2228;border-left-width:1.5px;border-radius:4px 4px 0 0;background:linear-gradient(#abb5c0,#a1acb8 40%,#9fa9b5)"></div>
<div class="a " style="left:147px;top:118px;width:121px;height:22px;border:1px solid #1c2228;border-left-width:1.5px;border-radius:4px 4px 0 0;background:linear-gradient(#abb5c0,#a1acb8 40%,#9fa9b5)"></div>
<div class="a " style="left:268px;top:118px;width:121px;height:22px;border:1px solid #1c2228;border-left-width:1.5px;border-radius:4px 4px 0 0;background:linear-gradient(#abb5c0,#a1acb8 40%,#9fa9b5)"></div>
<div class="a " style="left:389px;top:118px;width:121px;height:22px;border:1px solid #1c2228;border-left-width:1.5px;border-radius:4px 4px 0 0;background:linear-gradient(#abb5c0,#a1acb8 40%,#9fa9b5)"></div>
<div class="a " style="left:510px;top:118px;width:121px;height:22px;border:1px solid #1c2228;border-left-width:1.5px;border-radius:4px 4px 0 0;background:linear-gradient(#abb5c0,#a1acb8 40%,#9fa9b5)"></div>
<div class="a " style="left:631px;top:118px;width:121px;height:22px;border:1px solid #1c2228;border-left-width:1.5px;border-radius:4px 4px 0 0;background:linear-gradient(#abb5c0,#a1acb8 40%,#9fa9b5)"></div>
<div class="a " style="left:752px;top:118px;width:121px;height:22px;border:1px solid #1c2228;border-left-width:1.5px;border-radius:4px 4px 0 0;background:linear-gradient(#abb5c0,#a1acb8 40%,#9fa9b5)"></div>
<div class="a " style="left:873px;top:118px;width:121px;height:22px;border:1px solid #1c2228;border-left-width:1.5px;border-bottom:none;border-radius:4px 4px 0 0;background:linear-gradient(#dce0e6,#ccd2da)"></div>
<div class="a " style="left:874.5px;top:139px;width:118.5px;height:1px;background:#ccd2da"></div>
<svg class="a" style="left:32px;top:120.5px" width="16" height="16"><use href="#dv"/></svg>
<span class="t" style="left:51.3px;top:122.5px;font-size:11px;letter-spacing:-0.164px;font-family:'DejaVu Sans Condensed','DejaVu Sans','Liberation Sans',sans-serif;font-stretch:condensed;">Ting White the k...</span>
<div class="a " style="left:153px;top:121px;width:16px;height:16px;background:#fff;font-family:'Liberation Serif',serif;font-size:15px;line-height:16px;text-align:center;letter-spacing:-1px">W</div>
<span class="t" style="left:171.8px;top:122.5px;font-size:11px;letter-spacing:-0.016px;font-family:'DejaVu Sans Condensed','DejaVu Sans','Liberation Sans',sans-serif;font-stretch:condensed;">Portugal - Wikip...</span>
<svg class="a" style="left:274px;top:120.5px" width="16" height="16"><use href="#dv"/></svg>
<span class="t" style="left:292.8px;top:122.5px;font-size:11px;letter-spacing:-0.004px;font-family:'DejaVu Sans Condensed','DejaVu Sans','Liberation Sans',sans-serif;font-stretch:condensed;">STEEL HEARTS: ...</span>
<svg class="a" style="left:395.3px;top:120.5px" width="16" height="16"><use href="#dv"/></svg>
<span class="t" style="left:413.5px;top:122.5px;font-size:11px;letter-spacing:-0.030px;font-family:'DejaVu Sans Condensed','DejaVu Sans','Liberation Sans',sans-serif;font-stretch:condensed;">Valentine:Flowe...</span>
<svg class="a" style="left:518px;top:122px" width="13" height="13"><use href="#tg"/></svg>
<span class="t" style="left:534.5px;top:122.5px;font-size:11px;letter-spacing:-0.037px;font-family:'DejaVu Sans Condensed','DejaVu Sans','Liberation Sans',sans-serif;font-stretch:condensed;">Stefan G. Buche...</span>
<div class="a " style="left:637px;top:121px;width:16px;height:16px;background:#fff;font-size:7px;line-height:7px;font-weight:bold;text-align:center;letter-spacing:-0.4px"><div style="height:7px;padding-top:1px">You</div><div style="margin:1px 1px 0;background:#d22;color:#fff;border-radius:2px;height:7px">Tube</div></div>
<span class="t" style="left:656.5px;top:122.5px;font-size:11px;letter-spacing:0.141px;font-family:'DejaVu Sans Condensed','DejaVu Sans','Liberation Sans',sans-serif;font-stretch:condensed;">YouTube - Red ...</span>
<svg class="a" style="left:759px;top:122px" width="13" height="13"><use href="#tg"/></svg>
<span class="t" style="left:776.3px;top:122.5px;font-size:11px;letter-spacing:-0.325px;font-family:'DejaVu Sans Condensed','DejaVu Sans','Liberation Sans',sans-serif;font-stretch:condensed;">Kims Comic-Zeic...</span>
<svg class="a" style="left:881px;top:122px" width="13" height="13"><use href="#tg"/></svg>
<span class="t" style="left:897.3px;top:122.5px;font-size:11px;letter-spacing:-0.353px;font-family:'DejaVu Sans Condensed','DejaVu Sans','Liberation Sans',sans-serif;font-stretch:condensed;">Kims Comic-Zeic...</span>
<svg class="a" style="left:4px;top:119px" width="17" height="17" viewBox="0 0 17 17"><rect x="5.5" y="3.5" width="10" height="12" fill="#f4f4ee" stroke="#4a5058"/><path d="M7.5,8 H13.5 M7.5,10.5 H13.5 M7.5,13 H13.5" stroke="#8a9098" stroke-width="0.9"/><circle cx="4.6" cy="5" r="4.4" fill="#c4d2f4" opacity="0.85"/><circle cx="6.4" cy="5" r="3" fill="#f6ea70"/><circle cx="5.6" cy="4.6" r="1.4" fill="#fffde0"/></svg>
<div class="a " style="left:1001px;top:121px;width:15px;height:16px;border:1px solid #4c535c;border-radius:2px;background:linear-gradient(135deg,#a7aeb7,#7f8791)"><svg width="13" height="14"><path d="M3,3 L10,11 M10,3 L3,11" stroke="#eef1f4" stroke-width="2.2"/></svg></div>
<div class="a " style="left:1022px;top:26px;width:2px;height:696px;background:#aeb5bf"></div>
<div class="a " style="left:1009px;top:145px;width:14px;height:577px;background:#9a9fa6;border-left:1px solid #6d727a"></div>
<div class="a " style="left:1010px;top:145px;width:13px;height:14px;background:linear-gradient(#d5d9de,#b8bec6);border:1px solid #7b828b"><svg width="11" height="12"><polygon points="1,9 5.5,3.5 10,9" fill="#0a0a0a"/></svg></div>
<div class="a " style="left:1010px;top:708px;width:13px;height:14px;background:linear-gradient(#d5d9de,#b8bec6);border:1px solid #7b828b"><svg width="11" height="12"><polygon points="1,3.5 5.5,9 10,3.5" fill="#0a0a0a"/></svg></div>
<div class="a " style="left:1010px;top:546px;width:13px;height:162px;background:linear-gradient(90deg,#d2d7de,#bcc3cc);border:1px solid #7b828b"><div class="a" style="left:3px;top:76px;width:6px;height:1px;background:#8a919b;box-shadow:0 3px 0 #8a919b,0 6px 0 #8a919b,0 9px 0 #8a919b"></div></div>
<div class="a " style="left:8px;top:725px;width:13px;height:13px;background:#5b7399;color:#fff;font-size:12px;line-height:12px;font-weight:bold;font-style:italic;text-align:center">m</div>
<svg class="a" style="left:30px;top:725px" width="18" height="12" viewBox="0 0 18 12"><rect x="0.7" y="0.7" width="16.6" height="10.6" rx="2" fill="#dfe3e8" stroke="#3a4048" stroke-width="1.2"/><path d="M1.5,1.5 L9,7 L16.5,1.5 M1.5,10.5 L6.5,5.5 M16.5,10.5 L11.5,5.5" fill="none" stroke="#3a4048" stroke-width="1"/></svg>
<svg class="a" style="left:54px;top:724px" width="20" height="14" viewBox="0 0 20 14"><rect x="5.5" y="3.5" width="11" height="9" fill="#f2f3f5" stroke="#3a4048"/><circle cx="4.6" cy="4.6" r="3.8" fill="#c9d3de" stroke="#3a4048"/><path d="M8,6 H14 M8,8.5 H13 M12,11.5 L18,3.5" stroke="#3a4048" stroke-width="1"/></svg>
<svg class="a" style="left:82px;top:724px" width="15" height="14" viewBox="0 0 15 14"><rect x="1.5" y="0.7" width="12" height="12.6" rx="1.5" fill="#eceee8" stroke="#22262b" stroke-width="1.3"/><path d="M0.5,3 H3 M0.5,5.5 H3 M0.5,8 H3 M0.5,10.5 H3" stroke="#22262b" stroke-width="0.9"/><rect x="10.5" y="1.5" width="2.5" height="11" fill="#c8b870"/></svg>
<span class="t" style="left:105px;top:724.5px;font-size:12px;letter-spacing:0.883px;font-family:'DejaVu Sans Condensed','DejaVu Sans','Liberation Sans',sans-serif;font-stretch:condensed;color:#f4f6f8;text-shadow:0 0 1px #1c2026,1px 0 0 #1c2026,-1px 0 0 #1c2026,0 1px 0 #1c2026,0 -1px 0 #1c2026"><b>cZ</b></span>
<div class="a " style="left:128px;top:723px;width:2px;height:15px;border-left:1px solid #9aa1ab;border-right:1px solid #e4e7ec"></div>
<div class="a " style="left:808px;top:723px;width:2px;height:15px;border-left:1px solid #9aa1ab;border-right:1px solid #e4e7ec"></div>
<div class="a " style="left:936px;top:723px;width:2px;height:15px;border-left:1px solid #9aa1ab;border-right:1px solid #e4e7ec"></div>
<div class="a " style="left:964px;top:723px;width:2px;height:15px;border-left:1px solid #9aa1ab;border-right:1px solid #e4e7ec"></div>
<div class="a " style="left:987px;top:723px;width:2px;height:15px;border-left:1px solid #9aa1ab;border-right:1px solid #e4e7ec"></div>
<div class="a " style="left:1008px;top:723px;width:2px;height:15px;border-left:1px solid #9aa1ab;border-right:1px solid #e4e7ec"></div>
<svg class="a" style="left:938px;top:725px" width="26" height="11" viewBox="0 0 26 11"><path d="M0,3.6 H8 M0,7 H8 M18,5.3 H26" stroke="#22262b" stroke-width="1.3"/><path d="M0,5.3 H8 M18,4.2 H26" stroke="#f4f6f8" stroke-width="1"/><rect x="8" y="1" width="4" height="9" fill="#e4e7ea" stroke="#22262b"/><rect x="12.6" y="0.6" width="2.4" height="9.8" fill="#22262b"/><path d="M15.6,1 H18 L20,3 V8 L18,10 H15.6 Z" fill="#e4e7ea" stroke="#22262b"/></svg>
<svg class="a" style="left:968px;top:724px" width="19" height="14" viewBox="0 0 19 14"><rect x="8.5" y="2.5" width="9" height="10" fill="#f0e6a0" stroke="#6a6a5a"/><path d="M11,5.5 H16 M11,8 H15" stroke="#6a6a5a" stroke-width="0.9"/><path d="M0.6,5.6 Q5,1 10.4,5.6 Q5,9.6 0.6,5.6 Z" fill="#f4f6f8" stroke="#1c2026" stroke-width="1.1"/><circle cx="5.6" cy="5.4" r="2" fill="#1c2026"/></svg>
<svg class="a" style="left:991px;top:724px" width="17" height="14" viewBox="0 0 17 14"><path d="M9.4,7 V4.4 Q9.4,1.2 12.6,1.2 Q15.8,1.2 15.8,4.4 V6.4" fill="none" stroke="#2c3138" stroke-width="1.6"/><rect x="0.8" y="6.6" width="10" height="6.8" fill="#8f97a1" stroke="#2c3138" stroke-width="1.1"/><path d="M1.4,9 H10.4 M1.4,11 H10.4" stroke="#5a626c" stroke-width="0.8"/></svg>
<svg class="a" style="left:1010px;top:724px" width="14" height="14" viewBox="0 0 14 14"><path d="M2,14 L14,2 M6,14 L14,6 M10,14 L14,10" stroke="#8d949e" stroke-width="1.3"/><path d="M3,14 L14,3 M7,14 L14,7 M11,14 L14,11" stroke="#eef0f3" stroke-width="0.8"/></svg>
</body></html>
